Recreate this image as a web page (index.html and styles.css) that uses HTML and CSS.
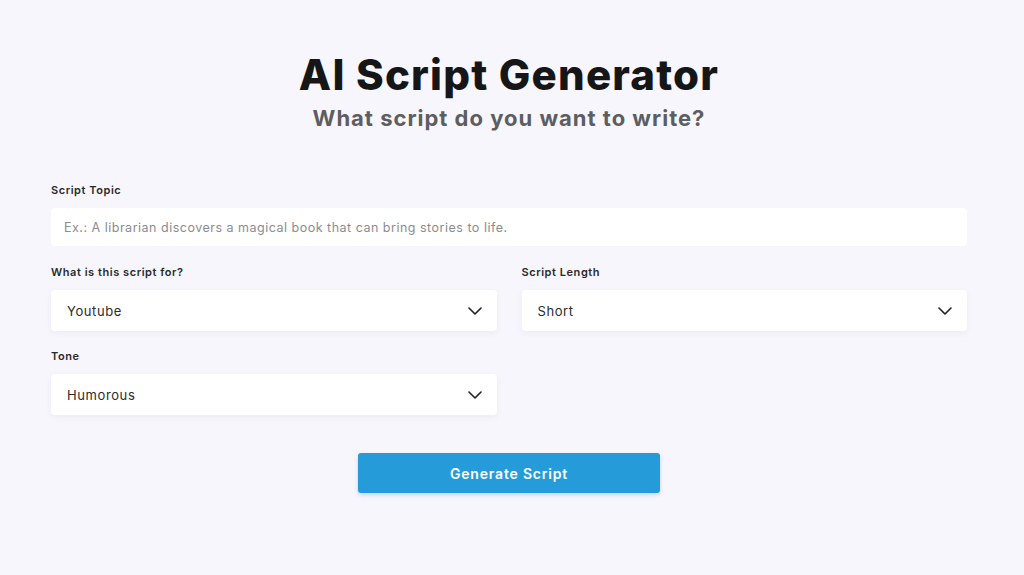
FILE: index.html
```html
<!DOCTYPE html>
<html lang="en">
<head>
<meta charset="utf-8">
<title>AI Script Generator</title>
<link rel="stylesheet" href="styles.css">
</head>
<body>
<main class="page">
  <header class="hero">
    <h1 class="title">AI Script Generator</h1>
    <p class="subtitle">What script do you want to write?</p>
  </header>
  <form class="form">
    <div class="field">
      <label class="label">Script Topic</label>
      <div class="input">Ex.: A librarian discovers a magical book that can bring stories to life.</div>
    </div>
    <div class="row row-first">
      <div class="field">
        <label class="label">What is this script for?</label>
        <div class="select"><span>Youtube</span>
          <svg class="chev" viewBox="0 0 14 8" width="14" height="8"><path d="M1 1l6 6 6-6" fill="none" stroke="#222" stroke-width="1.6" stroke-linecap="round" stroke-linejoin="round"/></svg>
        </div>
      </div>
      <div class="field">
        <label class="label">Script Length</label>
        <div class="select"><span>Short</span>
          <svg class="chev" viewBox="0 0 14 8" width="14" height="8"><path d="M1 1l6 6 6-6" fill="none" stroke="#222" stroke-width="1.6" stroke-linecap="round" stroke-linejoin="round"/></svg>
        </div>
      </div>
    </div>
    <div class="row">
      <div class="field">
        <label class="label">Tone</label>
        <div class="select"><span>Humorous</span>
          <svg class="chev" viewBox="0 0 14 8" width="14" height="8"><path d="M1 1l6 6 6-6" fill="none" stroke="#222" stroke-width="1.6" stroke-linecap="round" stroke-linejoin="round"/></svg>
        </div>
      </div>
      <div class="field"></div>
    </div>
    <div class="actions">
      <button type="button" class="btn">Generate Script</button>
    </div>
  </form>
</main>
</body>
</html>
```

FILE: styles.css
```css
* { box-sizing: border-box; }
html, body { margin: 0; padding: 0; }
body {
  background: #f7f6fd;
  font-family: Inter, "Open Sans", sans-serif;
  color: #222;
  height: 575px;
  overflow: hidden;
}
.page {
  padding: 50px 0 0 51px;
  width: 967px;
}
.hero { text-align: center; }
.title {
  margin: 0;
  font-size: 42px;
  line-height: 50px;
  font-weight: 800;
  color: #161616;
  letter-spacing: 1.2px;
}
.subtitle {
  margin: 4px 0 0;
  font-size: 22px;
  line-height: 28px;
  font-weight: 700;
  color: #5d5d62;
  letter-spacing: 1px;
}
.form {
  margin-top: 51px;
  display: flex;
  flex-direction: column;
  gap: 18px;
}
.field {
  display: flex;
  flex-direction: column;
  gap: 11px;
  flex: 1;
}
.label {
  font-size: 11px;
  line-height: 14px;
  font-weight: 600;
  color: #2a2a2a;
  letter-spacing: 0.55px;
}
.input {
  height: 38px;
  background: #fff;
  border-radius: 4px;
  padding: 0 13px;
  display: flex;
  align-items: center;
  font-size: 12.5px;
  color: #8b8b92;
  letter-spacing: 0.5px;
}
.row {
  display: flex;
  gap: 25px;
}
.row-first { margin-top: 1px; }
.select {
  height: 41px;
  background: #fff;
  border-radius: 4px;
  box-shadow: 0 2px 6px rgba(60, 60, 110, 0.06);
  padding: 0 15px 0 16px;
  display: flex;
  align-items: center;
  justify-content: space-between;
  font-size: 13px;
  color: #2b2b2b;
  letter-spacing: 0.6px;
}
.chev { display: block; }
.actions {
  display: flex;
  justify-content: center;
  margin-top: 20px;
}
.btn {
  width: 302px;
  height: 40px;
  border: none;
  border-radius: 3px;
  background: #259cd9;
  color: #fff;
  font-family: inherit;
  font-size: 14px;
  font-weight: 600;
  letter-spacing: 0.8px;
  box-shadow: 0 2px 4px rgba(30, 80, 130, 0.2);
}
```
